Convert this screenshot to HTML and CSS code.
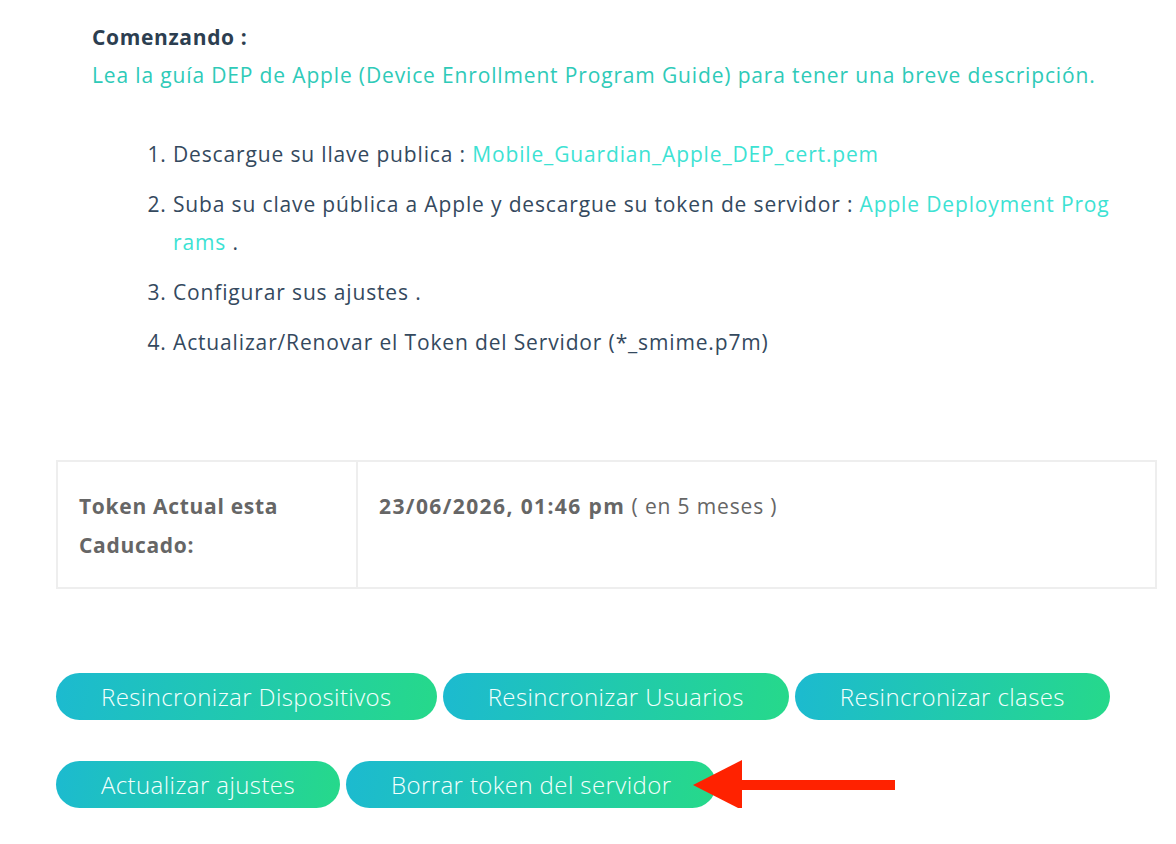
FILE: index.html
```html
<!DOCTYPE html>
<html lang="es">
<head>
<meta charset="utf-8">
<title>DEP</title>
<link rel="stylesheet" href="styles.css">
</head>
<body>
<div class="page">
  <section class="intro">
    <div class="title">Comenzando :</div>
    <a class="lead" href="#">Lea la guía DEP de Apple (Device Enrollment Program Guide) para tener una breve descripción.</a>
    <ol class="steps">
      <li>Descargue su llave publica : <a class="link" href="#">Mobile_Guardian_Apple_DEP_cert.pem</a></li>
      <li>Suba su clave pública a Apple y descargue su token de servidor : <a class="link" href="#">Apple Deployment Programs</a> .</li>
      <li>Configurar sus ajustes .</li>
      <li>Actualizar/Renovar el Token del Servidor (*_smime.p7m)</li>
    </ol>
  </section>
  <table class="token">
    <tr>
      <th>Token Actual esta Caducado:</th>
      <td><b>23/06/2026, 01:46 pm</b> ( en 5 meses )</td>
    </tr>
  </table>
  <div class="actions">
    <div class="row">
      <button class="btn">Resincronizar Dispositivos</button>
      <button class="btn">Resincronizar Usuarios</button>
      <button class="btn">Resincronizar clases</button>
    </div>
    <div class="row">
      <button class="btn">Actualizar ajustes</button>
      <div class="callout">
        <button class="btn">Borrar token del servidor</button>
        <svg class="arrow" width="206" height="52" viewBox="0 0 206 52" aria-hidden="true">
          <polygon points="0,25 49,0 49,50" fill="#ff2200"/>
          <rect x="48" y="20" width="154" height="10" fill="#ff2200"/>
        </svg>
      </div>
    </div>
  </div>
</div>
</body>
</html>
```
FILE: styles.css
```css
* { box-sizing: border-box; }
html, body { margin: 0; background: #fff; }
body {
  font-family: "Open Sans", "Noto Sans", sans-serif;
  font-size: 21px;
  letter-spacing: 0.85px;
  color: #34495e;
}
.page { padding: 18px 19px 0 56px; width: 1176px; }
.intro { padding-left: 36px; }
.title { font-weight: 700; line-height: 38px; color: #2c3e50; letter-spacing: 0.65px; }
.lead { display: block; color: #2ecab8; text-decoration: none; line-height: 38px; }
.steps {
  margin: 41px 0 0 0;
  padding-left: 81px;
  width: 1025px;
  line-height: 38px;
}
.steps li { margin-bottom: 12px; }
.link { color: #3de2d3; text-decoration: none; word-break: break-all; }
.token {
  margin-top: 99px;
  width: 1101px;
  border-collapse: collapse;
  border: 2px solid #eeeeee;
  color: #666;
  line-height: 39px;
}
.token th, .token td {
  text-align: left;
  vertical-align: top;
  padding: 25px 21px 22px;
  border: 2px solid #eeeeee;
}
.token th { width: 300px; font-weight: 700; letter-spacing: 0.7px; }
.token td { font-weight: 400; }
.token b { font-weight: 700; letter-spacing: 1.4px; }
.actions { margin-top: 84px; display: flex; flex-direction: column; gap: 41px; }
.row { display: flex; gap: 6px; align-items: center; }
.callout { position: relative; }
.btn {
  height: 47px;
  padding: 0 45px;
  border: 0;
  border-radius: 24px;
  background: linear-gradient(100deg, #1cbad0 0%, #26d98a 100%);
  color: #f4fffd;
  font-family: inherit;
  font-size: 24px;
  font-weight: 300;
  letter-spacing: 0.4px;
  cursor: pointer;
}
.arrow { position: absolute; left: 347px; top: -1px; }
```
